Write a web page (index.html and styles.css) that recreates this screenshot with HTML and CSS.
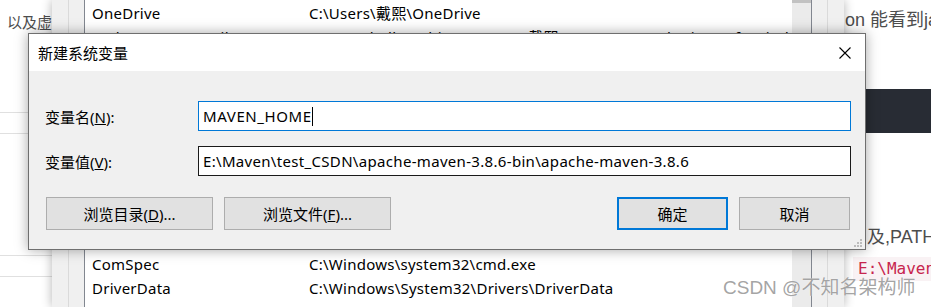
FILE: index.html
```html
<!DOCTYPE html>
<html>
<head>
<meta charset="utf-8">
<title>新建系统变量</title>
<link rel="stylesheet" href="styles.css">
</head>
<body>
<div class="blog">
	<div class="blog-left">
		<p class="blog-txt">以及虚拟</p>
		<div class="tbl-line l1"></div>
		<div class="tbl-line l2"></div>
		<div class="tbl-line l3"></div>
		<div class="tbl-line l4"></div>
	</div>
	<div class="blog-right">
		<p class="blog-txt t1">on 能看到java</p>
		<div class="code-block"></div>
		<p class="blog-txt t2">及,PATH</p>
		<p class="code-line"><code>E:\Maven\test_CSDN</code></p>
	</div>
</div>

<div class="envwin">
	<div class="group">
		<div class="listbox">
			<div class="rows">
				<ul class="user-list">
					<li class="row"><span>OneDrive</span><span>C:\Users\戴熙\OneDrive</span></li>
					<li class="row"><span>Path</span><span>C:\Program Files\MySQL\MySQL Shell 8.0\bin\;C:\Users\戴熙\AppData\Local\Microsoft\WindowsApps;</span></li>
				</ul>
				<ul class="sys-list">
					<li class="row"><span>ComSpec</span><span>C:\Windows\system32\cmd.exe</span></li>
					<li class="row"><span>DriverData</span><span>C:\Windows\System32\Drivers\DriverData</span></li>
					<li class="row"><span>JAVA_HOME</span><span>D:\Java\jdk1.8.0_181</span></li>
				</ul>
			</div>
			<div class="scroll"><div class="thumb"></div></div>
		</div>
	</div>
</div>

<div class="dialog">
	<div class="dlg-title">
		<span>新建系统变量</span>
		<svg class="close" width="12" height="12" viewBox="0 0 12 12"><path d="M0.5 0.5L11.5 11.5M11.5 0.5L0.5 11.5" stroke="#000" stroke-width="1.1" fill="none"/></svg>
	</div>
	<div class="dlg-body">
		<div class="fields">
			<div class="field">
				<label>变量名(<u>N</u>):</label>
				<div class="input focus">MAVEN_HOME<span class="caret"></span></div>
			</div>
			<div class="field">
				<label>变量值(<u>V</u>):</label>
				<div class="input">E:\Maven\test_CSDN\apache-maven-3.8.6-bin\apache-maven-3.8.6</div>
			</div>
		</div>
		<div class="btn-row">
			<button class="btn wide">浏览目录(<u>D</u>)...</button>
			<button class="btn wide">浏览文件(<u>F</u>)...</button>
			<span class="spacer"></span>
			<button class="btn default">确定</button>
			<button class="btn">取消</button>
		</div>
		<svg class="grip" width="10" height="10" viewBox="0 0 10 10">
			<rect x="7" y="1" width="2" height="2" fill="#bcbcbc"/>
			<rect x="4" y="4" width="2" height="2" fill="#bcbcbc"/>
			<rect x="7" y="4" width="2" height="2" fill="#bcbcbc"/>
			<rect x="1" y="7" width="2" height="2" fill="#bcbcbc"/>
			<rect x="4" y="7" width="2" height="2" fill="#bcbcbc"/>
			<rect x="7" y="7" width="2" height="2" fill="#bcbcbc"/>
		</svg>
	</div>
</div>

<div class="watermark">CSDN @不知名架构师</div>
</body>
</html>
```

FILE: styles.css
```css
*{margin:0; padding:0; box-sizing:border-box; list-style:none;}
body{position:relative; width:931px; height:307px; overflow:hidden; background:#fff; font-family:"Noto Sans","Noto Sans CJK SC",sans-serif; font-size:15px; color:#000;}

/* blog page behind the windows */
.blog{display:flex; height:307px;}
.blog-left{width:60px;}
.blog-txt{font-size:15px; line-height:24px; color:#4d4d4d; white-space:nowrap;}
.blog-left .blog-txt{margin-top:10px; padding-left:7px;}
.tbl-line{height:1px; background:#e0e0e0;}
.tbl-line.l1{margin-top:78px;}
.tbl-line.l2{margin-top:20px;}
.tbl-line.l3{margin-top:121px;}
.tbl-line.l4{margin-top:20px;}
.blog-right{margin-left:auto; width:151px; overflow:hidden;}
.blog-right .blog-txt{font-size:18px; line-height:28px; font-family:"Liberation Sans","Noto Sans CJK SC",sans-serif;}
.blog-right .t1{margin-top:6px; padding-left:65px;}
.code-block{height:44px; margin-top:55px; background:#282c34;}
.blog-right .t2{margin-top:90px; padding-left:87px;}
.code-line{margin-top:5px; padding-left:73px; white-space:nowrap; line-height:24px;}
.code-line code{display:inline-block; padding-left:5px; background:#f9f2f4; color:#c7254e; font-family:"DejaVu Sans Mono",monospace; font-size:16px;}

/* environment variables window */
.envwin{position:absolute; left:52px; top:0; width:792px; height:307px; padding-left:16px; background:#f0f0f0; box-shadow:0 0 10px rgba(0,0,0,.3);}
.group{width:760px; height:100%; padding:0 15px; border-left:1px solid #dadada; border-right:1px solid #dadada;}
.listbox{display:flex; height:100%; background:#fff; border-left:1px solid #828790; border-right:1px solid #828790;}
.rows{flex:1; display:flex; flex-direction:column; justify-content:space-between; overflow:hidden;}
.user-list{padding-top:1px;}
.sys-list{height:55px; overflow:hidden;}
.row{display:flex; height:24px; line-height:24px; white-space:nowrap; letter-spacing:.25px;}
.row span:first-child{width:224px; padding-left:7px;}
.scroll{width:19px; background:#ebebeb;}
.thumb{height:3px; background:#c2c2c2;}

/* new variable dialog */
.dialog{position:absolute; left:28px; top:33px; width:838px; height:217px; display:flex; flex-direction:column; background:#f0f0f0; border:1px solid #6f6f6f; box-shadow:0 0 12px rgba(0,0,0,.35);}
.dlg-title{display:flex; align-items:center; justify-content:space-between; height:37px; padding:0 14px 0 9px; background:#fff;}
.close{display:block;}
.dlg-body{position:relative; flex:1; padding:30px 14px 19px 16px;}
.fields{display:flex; flex-direction:column; gap:15px;}
.field{display:flex; align-items:center; height:30px;}
.field label{width:153px;}
.input{flex:1; display:flex; align-items:center; height:30px; padding-left:4px; background:#fff; border:1px solid #1a1a1a; white-space:nowrap; overflow:hidden; letter-spacing:.32px;}
.input.focus{border-color:#0078d7; letter-spacing:.6px;}
.caret{width:1px; height:19px; margin-left:0; background:#000;}
.btn-row{display:flex; gap:11px; margin:21px 1px 0 1px;}
.spacer{flex:1;}
.btn{width:111px; height:33px; background:#e1e1e1; border:1px solid #adadad; font-family:inherit; font-size:15px; color:#000;}
.btn.wide{width:167px;}
.btn.default{border:2px solid #0078d7;}
.grip{position:absolute; right:2px; bottom:1px;}

.watermark{position:absolute; left:723px; top:276px; font-size:19px; line-height:24px; color:rgba(140,140,140,.8); text-shadow:0 0 1px #fff; white-space:nowrap; font-family:"Liberation Sans","Noto Sans CJK SC",sans-serif;}
```
